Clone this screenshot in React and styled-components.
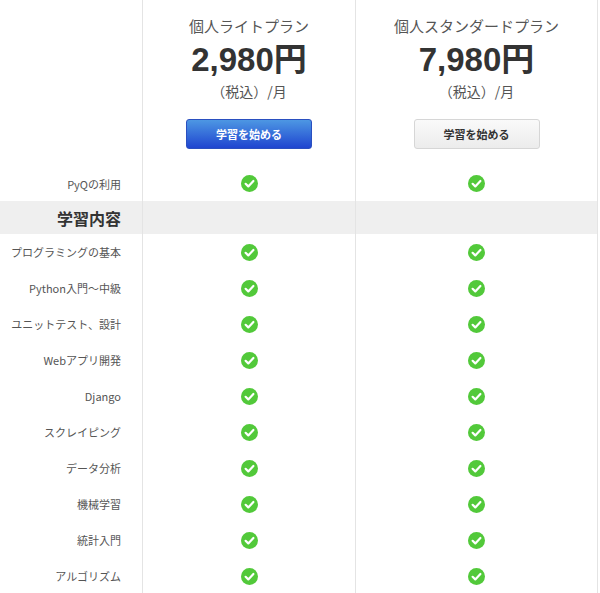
import React from "react";
import styled, { createGlobalStyle } from "styled-components";

const Global = createGlobalStyle`
  body { margin: 0; background: #fff; font-family: "Noto Sans CJK JP", "Liberation Sans", sans-serif; color: #333; }
`;

const Table = styled.div`
  display: grid;
  grid-template-columns: 142px 213px 243px;
  width: 600px;
`;

const Cell = styled.div`
  display: flex;
  align-items: center;
  justify-content: ${p => (p.$label ? "flex-end" : "center")};
  padding-right: ${p => (p.$label ? "21px" : "0")};
  height: ${p => p.$h || 36}px;
  border-left: ${p => (p.$label ? "none" : "1px solid #e4e4e4")};
  border-right: ${p => (p.$last ? "1px solid #e4e4e4" : "none")};
  background: ${p => (p.$gray ? "#efefef" : "transparent")};
  font-size: 11px;
  color: #555;
  white-space: nowrap;
`;

const Section = styled(Cell)`
  font-size: 16px;
  font-weight: bold;
  color: #333;
`;

const Head = styled.div`
  display: flex;
  flex-direction: column;
  align-items: center;
  height: 166px;
  border-left: ${p => (p.$empty ? "none" : "1px solid #e4e4e4")};
  border-right: ${p => (p.$last ? "1px solid #e4e4e4" : "none")};
`;

const PlanName = styled.div`
  margin-top: 16px;
  font-size: 15px;
  color: #555;
  line-height: 20px;
`;

const Price = styled.div`
  font-family: "Liberation Sans", "Noto Sans CJK JP", sans-serif;
  font-size: 33px;
  font-weight: bold;
  color: #333;
  line-height: 38px;
  margin-top: 2px;
  & span { font-family: "Noto Sans CJK JP", sans-serif; }
`;

const Tax = styled.div`
  font-size: 14px;
  color: #555;
  line-height: 20px;
  margin-top: 2px;
`;

const Button = styled.button`
  margin-top: 18px;
  width: 126px;
  height: 30px;
  border-radius: 3px;
  font-family: inherit;
  font-size: 11px;
  font-weight: bold;
  cursor: pointer;
  border: 1px solid ${p => (p.$primary ? "#2a4fc0" : "#d6d6d6")};
  color: ${p => (p.$primary ? "#fff" : "#333")};
  background: ${p => (p.$primary ? "linear-gradient(#4d97e3, #1f45d0)" : "linear-gradient(#fafafa, #ececec)")};
`;

const Check = () => (
  <svg width="17" height="17" viewBox="0 0 17 17">
    <circle cx="8.5" cy="8.5" r="8.5" fill="#52c93a" />
    <path d="M4.6 8.8 L7.3 11.4 L12.4 6" fill="none" stroke="#fff" strokeWidth="2.2" strokeLinecap="round" strokeLinejoin="round" />
  </svg>
);

const items = ["プログラミングの基本", "Python入門〜中級", "ユニットテスト、設計", "Webアプリ開発", "Django", "スクレイピング", "データ分析", "機械学習", "統計入門", "アルゴリズム"];

export default function App() {
  return (
    <>
      <Global />
      <Table>
        <Head $empty />
        <Head>
          <PlanName>個人ライトプラン</PlanName>
          <Price>2,980<span>円</span></Price>
          <Tax>（税込）/月</Tax>
          <Button $primary>学習を始める</Button>
        </Head>
        <Head $last>
          <PlanName>個人スタンダードプラン</PlanName>
          <Price>7,980<span>円</span></Price>
          <Tax>（税込）/月</Tax>
          <Button>学習を始める</Button>
        </Head>
        <Cell $label $h={35}>PyQの利用</Cell>
        <Cell $h={35}><Check /></Cell>
        <Cell $h={35} $last><Check /></Cell>
        <Section $label $gray $h={33}>学習内容</Section>
        <Cell $gray $h={33} />
        <Cell $gray $h={33} $last />
        {items.map(t => (
          <React.Fragment key={t}>
            <Cell $label>{t}</Cell>
            <Cell><Check /></Cell>
            <Cell $last><Check /></Cell>
          </React.Fragment>
        ))}
      </Table>
    </>
  );
}
